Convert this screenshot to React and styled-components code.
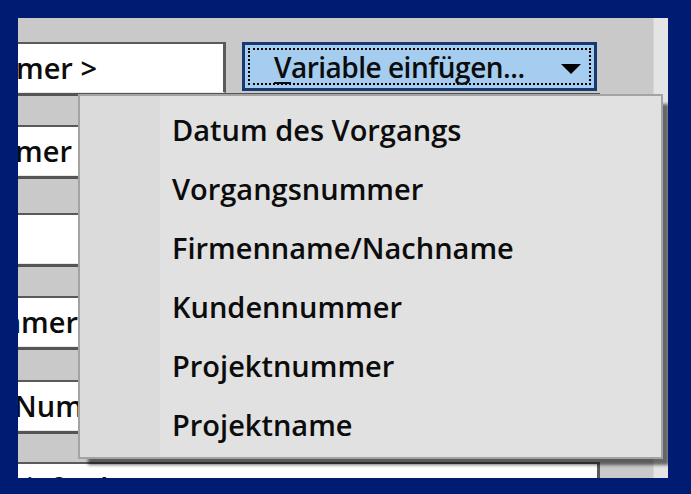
import React from 'react';
import styled, { createGlobalStyle } from 'styled-components';

const GlobalStyle = createGlobalStyle`
    html, body {
        margin: 0;
        padding: 0;
        background: #001c72;
    }
    body {
        font-family: "Open Sans", "Noto Sans", sans-serif;
    }
`;

const menuItems = [
    'Datum des Vorgangs',
    'Vorgangsnummer',
    'Firmenname/Nachname',
    'Kundennummer',
    'Projektnummer',
    'Projektname',
];

const rows = [
    { gap: 32, text: 'Vorgangsnummer', end: 54 },
    { gap: 37, text: '' },
    { gap: 32, text: 'Kundennummer', end: 60 },
    { gap: 33, text: 'Nummer', shift: 4 },
    { gap: 31, text: 'Lieferdatum', shift: 8, low: true },
];

export default function App() {
    return (
        <>
            <GlobalStyle />
            <Screen>
                <Window>
                    <Main>
                        <TopRow>
                            <Field $width={208}>
                                <TextClip $end={79}>
                                    <FieldText>&lt;Vorgangsnummer &gt;</FieldText>
                                </TextClip>
                            </Field>
                            <DropButton>
                                <FocusRect>
                                    <ButtonLabel>
                                        <u>V</u>ariable einfügen...
                                    </ButtonLabel>
                                    <Arrow />
                                </FocusRect>
                            </DropButton>
                        </TopRow>
                        {rows.map((row, i) => (
                            <React.Fragment key={i}>
                                <Gap $height={row.gap} />
                                <Field $width={582}>
                                    {row.end ? (
                                        <TextClip $end={row.end}>
                                            <FieldText>{row.text}</FieldText>
                                        </TextClip>
                                    ) : (
                                        <FieldText $shift={row.shift} $low={row.low}>{row.text}</FieldText>
                                    )}
                                </Field>
                            </React.Fragment>
                        ))}
                    </Main>
                    <Strip />
                    <Menu>
                        <Gutter />
                        <ItemList>
                            {menuItems.map((item) => (
                                <MenuItem key={item}>{item}</MenuItem>
                            ))}
                        </ItemList>
                    </Menu>
                </Window>
            </Screen>
        </>
    );
}

const Screen = styled.div`
    width: 691px;
    height: 494px;
    padding: 18px 23px 16px 18px;
    box-sizing: border-box;
`;

const Window = styled.div`
    position: relative;
    display: flex;
    width: 650px;
    height: 460px;
    background: #c9c9c9;
    overflow: hidden;
`;

const Main = styled.div`
    flex: 1;
    display: flex;
    flex-direction: column;
    padding-top: 24px;
`;

const Strip = styled.div`
    width: 15px;
    background: #e4e4e4;
    border-left: 1px solid #d6d6d6;
    box-sizing: border-box;
`;

const TopRow = styled.div`
    flex: none;
    display: flex;
    align-items: flex-start;
    gap: 16px;
`;

const Field = styled.div`
    flex: none;
    display: flex;
    align-items: center;
    width: ${p => p.$width}px;
    height: 51px;
    box-sizing: border-box;
    background: #ffffff;
    border-top: 2px solid #5a5a5a;
    border-right: 3px solid #5a5a5a;
    border-bottom: 1px solid #e8e8e8;
    overflow: hidden;
`;

const Gap = styled.div`
    flex: none;
    height: ${p => p.$height}px;
    width: 582px;
    box-sizing: border-box;
    background: #c9c9c9;
    border-top: 3px solid #555555;
`;

const TextClip = styled.div`
    display: flex;
    justify-content: flex-end;
    width: ${p => p.$end}px;
    overflow: hidden;
`;

const FieldText = styled.span`
    flex: none;
    white-space: nowrap;
    font-size: 29px;
    font-weight: 600;
    color: #0c0c0c;
    line-height: 30px;
    margin-left: ${p => (p.$shift ? -p.$shift : 0)}px;
    align-self: ${p => (p.$low ? 'flex-start' : 'center')};
    margin-top: ${p => (p.$low ? 9 : 0)}px;
`;

const DropButton = styled.div`
    width: 355px;
    height: 49px;
    box-sizing: border-box;
    background: #a5cdef;
    border: 3px solid #17396f;
    padding: 3px;
`;

const FocusRect = styled.div`
    height: 100%;
    box-sizing: border-box;
    border: 2px dotted #000;
    display: flex;
    align-items: center;
    padding: 0 8px 0 24px;
`;

const ButtonLabel = styled.span`
    flex: 1;
    white-space: nowrap;
    font-size: 28px;
    font-weight: 600;
    letter-spacing: -0.5px;
    color: #0c0c0c;
    line-height: 30px;

    u {
        text-decoration-thickness: 2px;
        text-underline-offset: 4px;
    }
`;

const Arrow = styled.span`
    width: 0;
    height: 0;
    border-left: 10px solid transparent;
    border-right: 10px solid transparent;
    border-top: 10px solid #000;
    margin-top: 4px;
`;

const Menu = styled.div`
    position: absolute;
    left: 60px;
    top: 76px;
    width: 585px;
    height: 365px;
    box-sizing: border-box;
    display: flex;
    background: #e1e1e1;
    border: 2px solid #a3a3a3;
    box-shadow: 8px 8px 3px -2px rgba(0, 0, 0, 0.55);
`;

const Gutter = styled.div`
    width: 80px;
    background: #dbdbdb;
`;

const ItemList = styled.div`
    display: flex;
    flex-direction: column;
    padding-top: 4px;
`;

const MenuItem = styled.div`
    height: 59px;
    display: flex;
    align-items: center;
    padding-left: 12px;
    font-size: 29px;
    font-weight: 600;
    color: #0c0c0c;
    white-space: nowrap;
`;
